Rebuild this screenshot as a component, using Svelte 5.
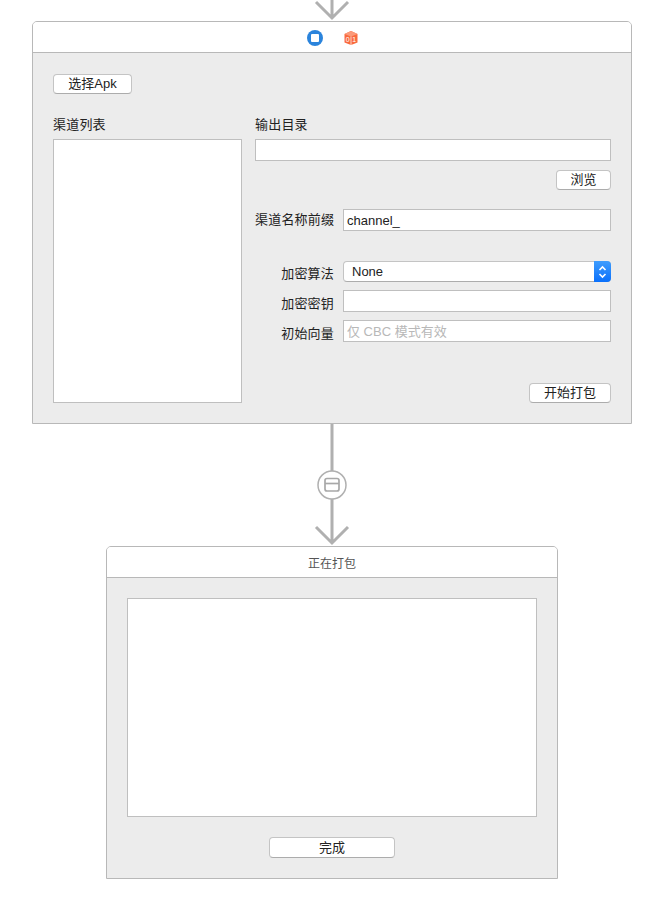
<script>
  let channelPrefix = 'channel_';
  let algorithm = 'None';
</script>

<div class="board">
  <svg class="arrow-top" width="40" height="21" viewBox="0 0 40 21">
    <path d="M20 0V18M4 2L20 18L36 2" fill="none" stroke="#b0b0b0" stroke-width="3" />
  </svg>

  <section class="scene main-scene">
    <header class="bar">
      <svg width="18" height="18" viewBox="0 0 18 18">
        <circle cx="9" cy="9" r="8" fill="#2b84dc" />
        <rect x="5" y="5" width="8" height="8" rx="1" fill="#fff" />
      </svg>
      <svg width="16" height="16" viewBox="0 0 16 16">
        <path d="M1.500 4L8 1L14.500 4V12.500L8 15L1.500 12.500Z" fill="#f96a3e" />
        <path d="M1.500 4L8 1L14.500 4L8 6.500Z" fill="#fb9a7a" />
        <path d="M8 6.500V15" stroke="#fdd5c6" stroke-width="1" />
        <text x="4.800" y="12.200" class="digit">0</text>
        <text x="11.300" y="12.200" class="digit">1</text>
      </svg>
    </header>

    <div class="content">
      <button class="btn pick">选择Apk</button>
      <div class="columns">
        <div class="left">
          <div class="label">渠道列表</div>
          <div class="list"></div>
        </div>
        <div class="right">
          <div class="label">输出目录</div>
          <input class="field" type="text" />
          <button class="btn browse">浏览</button>
          <div class="row prefix">
            <span class="row-label wide">渠道名称前缀</span>
            <input class="field" type="text" bind:value={channelPrefix} />
          </div>
          <div class="row algo">
            <span class="row-label">加密算法</span>
            <div class="select">
              <span class="select-text">{algorithm}</span>
              <span class="stepper">
                <svg width="9" height="14" viewBox="0 0 9 14">
                  <path d="M1.500 5L4.500 2L7.500 5M1.500 9L4.500 12L7.500 9" fill="none" stroke="#fff" stroke-width="1.600" />
                </svg>
              </span>
            </div>
          </div>
          <div class="row key">
            <span class="row-label">加密密钥</span>
            <input class="field" type="text" />
          </div>
          <div class="row iv">
            <span class="row-label">初始向量</span>
            <input class="field" type="text" placeholder="仅 CBC 模式有效" />
          </div>
          <button class="btn start">开始打包</button>
        </div>
      </div>
    </div>
  </section>

  <svg class="segue" width="40" height="122" viewBox="0 0 40 122">
    <path d="M20 0V47M20 75V119M4 103L20 119L36 103" fill="none" stroke="#b0b0b0" stroke-width="3" />
    <circle cx="20" cy="61" r="14" fill="#fff" stroke="#b0b0b0" stroke-width="1.500" />
    <rect x="13" y="54.500" width="14" height="12.500" rx="2" fill="none" stroke="#a8a8a8" stroke-width="1.700" />
    <path d="M13 59.500H27" stroke="#a8a8a8" stroke-width="1.700" />
  </svg>

  <section class="scene progress-scene">
    <header class="bar title">正在打包</header>
    <div class="content centered">
      <div class="log"></div>
      <button class="btn done">完成</button>
    </div>
  </section>
</div>

<style>
  :global(body) {
    background: #fff;
  }

  .board {
    width: 664px;
    height: 900px;
    display: flex;
    flex-direction: column;
    align-items: center;
    overflow: hidden;
    font-family: "Liberation Sans", "Noto Sans CJK SC", sans-serif;
    font-size: 13px;
    color: #222;
  }

  svg {
    display: block;
    flex: none;
  }

  .digit {
    font-family: "Liberation Sans", sans-serif;
    font-size: 7px;
    text-anchor: middle;
    fill: #fff;
  }

  .scene {
    box-sizing: border-box;
    background: #ececec;
    border: 1px solid #b8b8b8;
    border-radius: 5px 5px 0 0;
    flex: none;
  }

  .main-scene {
    width: 600px;
    height: 403px;
  }

  .progress-scene {
    width: 452px;
    height: 333px;
  }

  .bar {
    box-sizing: border-box;
    height: 31px;
    background: #fff;
    border-bottom: 1px solid #b8b8b8;
    border-radius: 4px 4px 0 0;
    display: flex;
    align-items: center;
    justify-content: center;
    gap: 19px;
    padding-top: 1px;
  }

  .bar.title {
    font-size: 12px;
    color: #555;
  }

  .content {
    padding: 21px 20px 20px;
  }

  .centered {
    display: flex;
    flex-direction: column;
    align-items: center;
    padding-top: 20px;
  }

  .btn {
    box-sizing: border-box;
    display: block;
    height: 20px;
    padding: 0;
    background: #fff;
    border: 1px solid #c4c4c4;
    border-bottom-color: #acacac;
    border-radius: 4px;
    font: inherit;
    line-height: 18px;
    color: #222;
  }

  .pick {
    width: 79px;
  }

  .columns {
    display: flex;
    gap: 13px;
    margin-top: 20px;
  }

  .left {
    width: 189px;
  }

  .right {
    width: 356px;
    display: flex;
    flex-direction: column;
  }

  .label {
    height: 25px;
    line-height: 22px;
    letter-spacing: 0.200px;
  }

  .list {
    box-sizing: border-box;
    height: 264px;
    background: #fff;
    border: 1px solid #bfbfbf;
  }

  .field {
    box-sizing: border-box;
    width: 100%;
    height: 22px;
    min-width: 0;
    margin: 0;
    padding: 0 3px;
    background: #fff;
    border: 1px solid #bfbfbf;
    border-radius: 0;
    outline: none;
    font: inherit;
    color: #222;
  }

  .field::placeholder {
    color: #b8b8b8;
    opacity: 1;
  }

  .browse {
    width: 55px;
    margin: 9px 0 0 auto;
  }

  .row {
    display: flex;
    align-items: center;
    height: 22px;
  }

  .row-label {
    flex: none;
    box-sizing: border-box;
    width: 79px;
    margin-right: 9px;
    padding-top: 2px;
    text-align: right;
    letter-spacing: 0.200px;
  }

  .row-label.wide {
    padding-top: 0;
    padding-bottom: 3px;
    white-space: nowrap;
  }

  .prefix {
    margin-top: 19px;
  }

  .algo {
    height: 21px;
    margin-top: 30px;
  }

  .key {
    margin-top: 8px;
  }

  .iv {
    margin-top: 8px;
  }

  .select {
    box-sizing: border-box;
    flex: 1;
    height: 21px;
    display: flex;
    align-items: center;
    justify-content: space-between;
    background: #fff;
    border: 1px solid #c4c4c4;
    border-bottom-color: #acacac;
    border-radius: 4px;
    padding-left: 8px;
  }

  .stepper {
    width: 17px;
    height: 21px;
    margin-right: -1px;
    display: flex;
    align-items: center;
    justify-content: center;
    background: linear-gradient(#3f9dfd, #0a70fb);
    border-radius: 0 4px 4px 0;
  }

  .start {
    width: 82px;
    margin: 41px 0 0 auto;
  }

  .log {
    box-sizing: border-box;
    width: 410px;
    height: 219px;
    background: #fff;
    border: 1px solid #bfbfbf;
  }

  .done {
    width: 126px;
    height: 21px;
    margin-top: 20px;
  }
</style>
